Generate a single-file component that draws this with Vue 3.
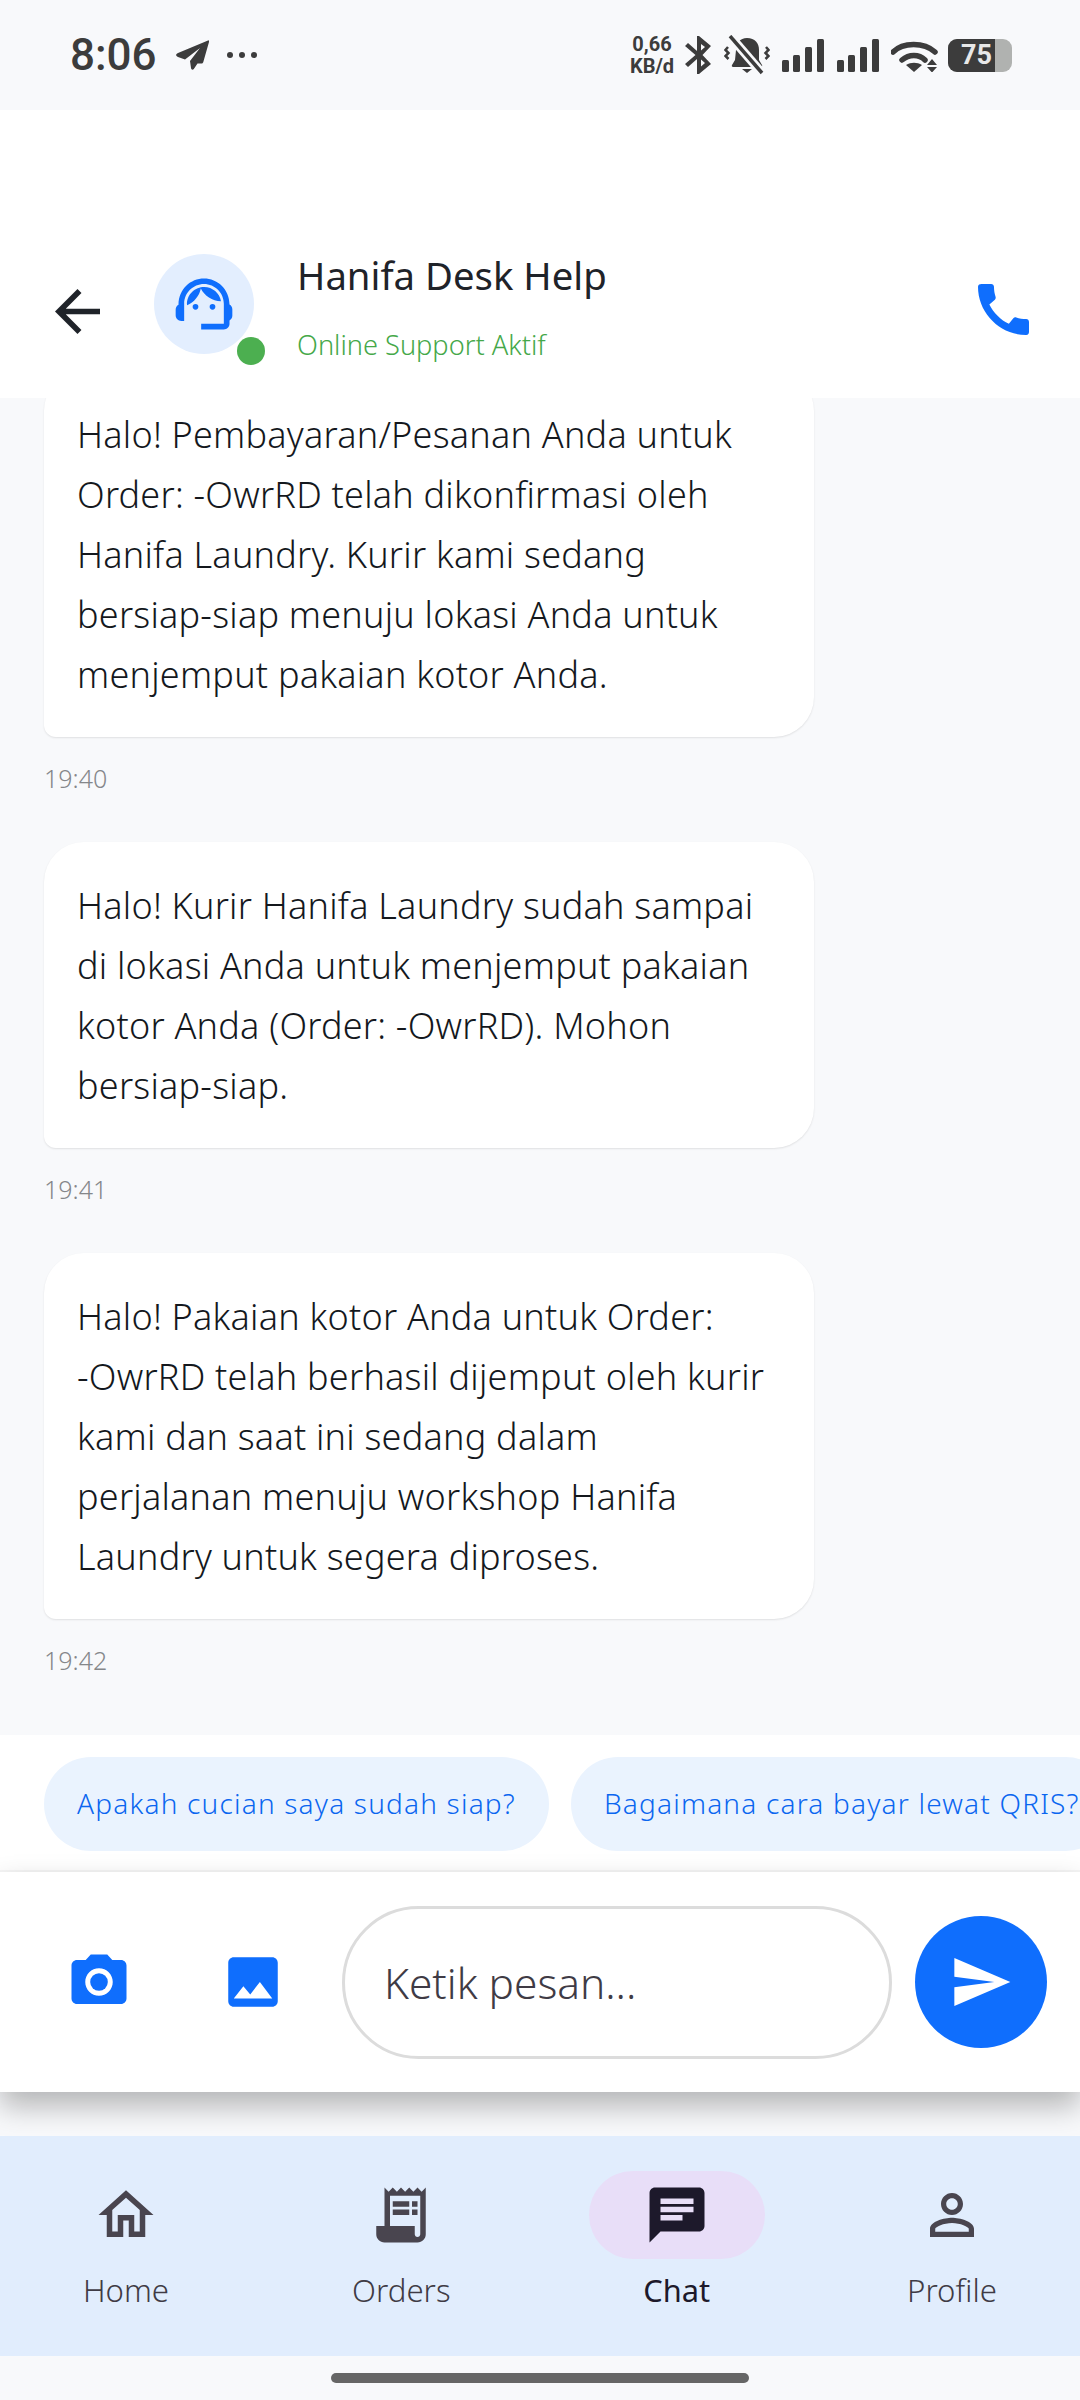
<script setup>
const messages = [
  { time: '19:40', lines: ['Halo! Pembayaran/Pesanan Anda untuk', 'Order: -OwrRD telah dikonfirmasi oleh', 'Hanifa Laundry. Kurir kami sedang', 'bersiap-siap menuju lokasi Anda untuk', 'menjemput pakaian kotor Anda.'] },
  { time: '19:41', lines: ['Halo! Kurir Hanifa Laundry sudah sampai', 'di lokasi Anda untuk menjemput pakaian', 'kotor Anda (Order: -OwrRD). Mohon', 'bersiap-siap.'] },
  { time: '19:42', lines: ['Halo! Pakaian kotor Anda untuk Order:', '-OwrRD telah berhasil dijemput oleh kurir', 'kami dan saat ini sedang dalam', 'perjalanan menuju workshop Hanifa', 'Laundry untuk segera diproses.'] },
]
const chips = ['Apakah cucian saya sudah siap?', 'Bagaimana cara bayar lewat QRIS?']
const nav = [
  { label: 'Home', paths: ['M12 5.69l5 4.5V18h-2v-6H9v6H7v-7.81l5-4.5M12 3L2 12h3v8h6v-6h2v6h6v-8h3L12 3z'] },
  { label: 'Orders', paths: ['M19.5 3.5L18 2l-1.5 1.5L15 2l-1.5 1.5L12 2l-1.5 1.5L9 2 7.5 3.5 6 2v14H3v3c0 1.66 1.34 3 3 3h12c1.66 0 3-1.34 3-3V2l-1.5 1.5zM19 19c0 .55-.45 1-1 1s-1-.45-1-1v-3H8V5h11v14z', 'M9 7h6v2H9zM16 7h2v2h-2zM9 10h6v2H9zM16 10h2v2h-2z'] },
  { label: 'Chat', active: true, paths: ['M20 2H4c-1.1 0-1.99.9-1.99 2L2 22l4-4h14c1.1 0 2-.9 2-2V4c0-1.1-.9-2-2-2zM6 9h12v2H6V9zm8 5H6v-2h8v2zm4-6H6V6h12v2z'] },
  { label: 'Profile', paths: ['M12 5.9c1.16 0 2.1.94 2.1 2.1s-.94 2.1-2.1 2.1S9.9 9.16 9.9 8s.94-2.1 2.1-2.1m0 9c2.97 0 6.1 1.46 6.1 2.1v1.1H5.9V17c0-.64 3.13-2.1 6.1-2.1M12 4C9.79 4 8 5.79 8 8s1.79 4 4 4 4-1.79 4-4-1.79-4-4-4zm0 9c-2.67 0-8 1.34-8 4v3h16v-3c0-2.66-5.33-4-8-4z'] },
]
</script>

<template>
  <div class="screen">
    <div class="status">
      <span class="clock">8:06</span>
      <svg class="tg" viewBox="0 0 34 32"><path d="M33 1.500 3 14c-2.500 1-2.500 3 0 4l7 2.500L25 9 15 22l1 7c.3 1.800 1.800 2.300 2.800 1l3.700-5.500h0l4-.1c1 0 1.600-.6 1.800-1.500L34 3c.2-1.300-.3-2-1-1.500z" /></svg>
      <div class="dots"><i></i><i></i><i></i></div>
      <div class="spacer"></div>
      <div class="speed"><span>0,66</span><span>KB/d</span></div>
      <svg class="bt" viewBox="0 0 28 40"><path d="M13 1v15L4 8 1 11l10.500 9L1 29l3 3 9-8v15h2l12-10-8.500-9L27 11 15 1h-2zm4 8 4 3-4 3.500V9zm0 15.500 4 3.500-4 3.500v-7z" /></svg>
      <svg class="bell" viewBox="0 0 46 40"><path d="M23 3c-7 0-11 5-11 12l-1 10-3 5c-.5 1 0 2 1.200 2h27.600c1.200 0 1.700-1 1.200-2l-3-5V15c0-7-4-12-12-12zM18 34h10l-5 4z" /><path d="M6 1 38 38" stroke="#f8f9fb" stroke-width="9" /><path d="M6 1 38 38" stroke="#3c3c3c" stroke-width="3.500" /><path d="M4 12 1.500 15l3 3-3 3 3 3M42 12l2.500 3-3 3 3 3-3 3" fill="none" stroke="#3c3c3c" stroke-width="2.500" /></svg>
      <svg class="sig" viewBox="0 0 42 33"><rect x="0" y="21" width="7" height="12" rx="1.500" /><rect x="11" y="16" width="7" height="17" rx="1.500" /><rect x="23" y="8" width="7" height="25" rx="1.500" /><rect x="35" y="0" width="7" height="33" rx="1.500" /></svg>
      <svg class="sig sig2" viewBox="0 0 42 33"><rect x="0" y="21" width="7" height="12" rx="1.500" /><rect x="11" y="16" width="7" height="17" rx="1.500" /><rect x="23" y="8" width="7" height="25" rx="1.500" /><rect x="35" y="0" width="7" height="33" rx="1.500" /></svg>
      <svg class="wifi" viewBox="0 0 47 33"><path d="M2 13C12 3 33 3 44 13" fill="none" stroke="#3c3c3c" stroke-width="5.500" stroke-linecap="round" /><path d="M11 21c7-6 17-6 23 0" fill="none" stroke="#3c3c3c" stroke-width="5.500" stroke-linecap="round" /><path d="M15 26c5-3 11-3 16 0l-8 7z" /><path d="M41 20l5 6H36zM36 28h10l-5 5.500z" /></svg>
      <div class="battery"><div class="batt-fill">75</div><div class="batt-cap"></div></div>
    </div>

    <header class="header">
      <svg class="back" viewBox="4 4 16 16"><path d="M20 11H7.830l5.590-5.590L12 4l-8 8 8 8 1.410-1.410L7.830 13H20v-2z" /></svg>
      <div class="avatar">
        <svg viewBox="0 0 24 24"><path d="M21 12.220C21 6.730 16.740 3 12 3c-4.690 0-9 3.650-9 9.280-.6.340-1 .98-1 1.720v2c0 1.100.9 2 2 2h1v-6.100c0-3.870 3.130-7 7-7s7 3.130 7 7V19h-8v2h8c1.100 0 2-.9 2-2v-1.220c.59-.31 1-.92 1-1.640v-2.300c0-.7-.41-1.310-1-1.620z" /><circle cx="9" cy="13" r="1" /><circle cx="15" cy="13" r="1" /><path d="M18 11.030C17.520 8.180 15.040 6 12.050 6c-3.030 0-6.290 2.510-6.030 6.450 2.470-1.010 4.330-3.210 4.860-5.890 1.310 2.630 4 4.440 7.120 4.470z" /></svg>
        <span class="online"></span>
      </div>
      <div class="who">
        <div class="name">Hanifa Desk Help</div>
        <div class="sub">Online Support Aktif</div>
      </div>
      <svg class="phone" viewBox="3 3 18 18"><path d="M20.010 15.380c-1.230 0-2.420-.2-3.530-.56-.35-.12-.74-.03-1.010.24l-1.570 1.970c-2.830-1.350-5.480-3.900-6.890-6.830l1.950-1.660c.27-.28.35-.67.24-1.020-.37-1.110-.56-2.300-.56-3.530 0-.54-.45-.99-.99-.99H4.190C3.650 3 3 3.240 3 3.990 3 13.280 10.730 21 20.010 21c.71 0 .99-.63.99-1.180v-3.450c0-.54-.45-.99-.99-.99z" /></svg>
    </header>

    <main class="messages">
      <div v-for="m in messages" :key="m.time" class="msg">
        <div class="bubble"><span v-for="l in m.lines" :key="l" class="line">{{ l }}</span></div>
        <div class="time">{{ m.time }}</div>
      </div>
    </main>

    <div class="chips">
      <span v-for="c in chips" :key="c" class="chip">{{ c }}</span>
    </div>

    <div class="composer">
      <svg class="cam" viewBox="0 0 24 24"><circle cx="12" cy="12" r="3.200" /><path d="M9 2L7.170 4H4c-1.100 0-2 .9-2 2v12c0 1.100.9 2 2 2h16c1.100 0 2-.9 2-2V6c0-1.100-.9-2-2-2h-3.170L15 2H9zm3 15c-2.760 0-5-2.240-5-5s2.240-5 5-5 5 2.240 5 5-2.240 5-5 5z" /></svg>
      <svg class="gal" viewBox="0 0 24 24"><path d="M21 19V5c0-1.100-.9-2-2-2H5c-1.100 0-2 .9-2 2v14c0 1.100.9 2 2 2h14c1.100 0 2-.9 2-2zM8.500 13.500l2.500 3.010L14.500 12l4.500 6H5l3.500-4.500z" /></svg>
      <div class="input">Ketik pesan...</div>
      <div class="send"><svg viewBox="0 0 24 24"><path d="M2.010 21L23 12 2.010 3 2 10l15 2-15 2z" /></svg></div>
    </div>

    <div class="gap"></div>

    <nav class="nav">
      <div v-for="n in nav" :key="n.label" class="item" :class="{ active: n.active }">
        <div class="pill"><svg viewBox="0 0 24 24"><path v-for="p in n.paths" :key="p" :d="p" /></svg></div>
        <span class="label">{{ n.label }}</span>
      </div>
    </nav>

    <div class="home-bar"><span></span></div>
  </div>
</template>

<style>
html, body { margin: 0; background: #f8f9fb; }
</style>

<style scoped>
.screen { width: 1080px; height: 2400px; display: flex; flex-direction: column; background: #f8f9fb; font-family: "Noto Sans", sans-serif; font-weight: 300; overflow: hidden; }
.status { height: 110px; flex: none; display: flex; align-items: center; padding: 0 68px 0 70px; box-sizing: border-box; background: #f8f9fb; color: #3c3c3c; }
.status svg { fill: #3c3c3c; flex: none; }
.clock { font: 500 44px Roboto, sans-serif; width: 105px; }
.tg { width: 34px; height: 32px; }
.dots { display: flex; gap: 6px; margin-left: 18px; }
.dots i { width: 6px; height: 6px; border-radius: 50%; background: #3c3c3c; }
.spacer { flex: 1; }
.speed { display: flex; flex-direction: column; align-items: center; font: 700 20px/22px Roboto, sans-serif; width: 44px; }
.bt { width: 28px; height: 40px; margin-left: 10px; }
.bell { width: 46px; height: 40px; margin-left: 12px; }
.sig { width: 42px; height: 33px; margin-left: 12px; }
.sig2 { margin-left: 13px; }
.wifi { width: 47px; height: 33px; margin-left: 12px; }
.battery { display: flex; align-items: center; margin-left: 10px; width: 64px; height: 33px; border-radius: 9px; overflow: hidden; background: #b0b2b0; flex: none; }
.batt-fill { width: 47px; height: 33px; background: #3c3c3c; color: #e8e8e8; font: 700 27px/33px Roboto, sans-serif; text-align: right; padding-right: 3px; box-sizing: border-box; }
.batt-cap { flex: 1; }

.header { height: 288px; flex: none; display: flex; align-items: flex-start; background: #fff; padding-top: 144px; box-sizing: border-box; }
.back { width: 45px; height: 45px; margin: 35px 0 0 55px; fill: #1f2329; flex: none; }
.avatar { position: relative; width: 100px; height: 100px; margin-left: 54px; border-radius: 50%; background: #e3eefe; display: flex; align-items: center; justify-content: center; flex: none; }
.avatar svg { width: 68px; height: 68px; fill: #0f6efd; }
.online { position: absolute; right: -11px; bottom: -11px; width: 28px; height: 28px; border-radius: 50%; background: #4caf50; }
.who { margin-left: 43px; flex: 1; }
.name { font-size: 38.300px; line-height: 52px; color: #1f2329; margin-top: -5px; font-weight: 400; }
.sub { font-size: 27.200px; line-height: 36px; color: #45a849; margin-top: 26px; }
.phone { width: 51px; height: 51px; margin: 30px 51px 0 0; fill: #0f6efd; flex: none; }

.messages { flex: 1; min-height: 0; overflow: hidden; display: flex; flex-direction: column; justify-content: flex-end; padding: 0 0 57px 44px; background: #f8f9fb; }
.msg { flex: none; }
.msg + .msg { margin-top: 46px; }
.bubble { width: 770px; box-sizing: border-box; padding: 34px 33px 32px; background: #fff; border-radius: 40px 40px 40px 12px; box-shadow: 0 1px 2px rgba(0,0,0,.1); color: #14181d; font-size: 36px; letter-spacing: .23px; line-height: 60px; }
.line { display: block; white-space: nowrap; }
.time { font-size: 25px; line-height: 36px; color: #85878a; margin-top: 23px; }

.chips { height: 137px; flex: none; display: flex; gap: 22px; padding: 22px 0 0 44px; box-sizing: border-box; background: #fff; overflow: hidden; border-bottom: 2px solid #f6f6f6; }
.chip { height: 94px; flex: none; display: flex; align-items: center; padding: 0 33px 2px; box-sizing: border-box; border-radius: 47px; background: #eaf3fe; color: #0a66f0; font-size: 28px; letter-spacing: 1.200px; white-space: nowrap; }

.composer { height: 220px; flex: none; display: flex; align-items: center; background: #fff; box-shadow: 0 14px 28px rgba(0,0,0,.28); position: relative; }
.cam { width: 66px; height: 66px; margin-left: 66px; fill: #0f6efd; flex: none; }
.gal { width: 66px; height: 66px; margin-left: 88px; fill: #0f6efd; flex: none; }
.input { width: 550px; height: 153px; box-sizing: border-box; margin-left: 56px; border: 3px solid #dcdcdc; border-radius: 77px; padding-left: 39px; display: flex; align-items: center; font-size: 42.400px; color: #3f3b45; flex: none; }
.send { width: 132px; height: 132px; margin-left: 23px; border-radius: 50%; background: #0f6efd; display: flex; align-items: center; justify-content: center; flex: none; }
.send svg { width: 64px; height: 64px; fill: #fff; }

.gap { height: 44px; flex: none; }

.nav { height: 220px; flex: none; display: flex; justify-content: space-between; padding: 35px 40px 0 38px; box-sizing: border-box; background: #e1edfd; position: relative; }
.item { width: 176px; display: flex; flex-direction: column; align-items: center; }
.pill { width: 176px; height: 88px; border-radius: 44px; display: flex; align-items: center; justify-content: center; }
.pill svg { width: 66px; height: 66px; fill: #49454f; }
.active .pill { background: #e8def8; }
.active .pill svg { fill: #1d192b; }
.label { font-size: 31.200px; line-height: 42px; margin-top: 10px; color: #3f3b45; }
.active .label { color: #1d192b; font-weight: 400; font-size: 30.800px; }

.home-bar { height: 44px; flex: none; display: flex; justify-content: center; padding-top: 17px; box-sizing: border-box; background: #f8f9fb; }
.home-bar span { width: 418px; height: 10px; border-radius: 5px; background: #666; }
</style>
